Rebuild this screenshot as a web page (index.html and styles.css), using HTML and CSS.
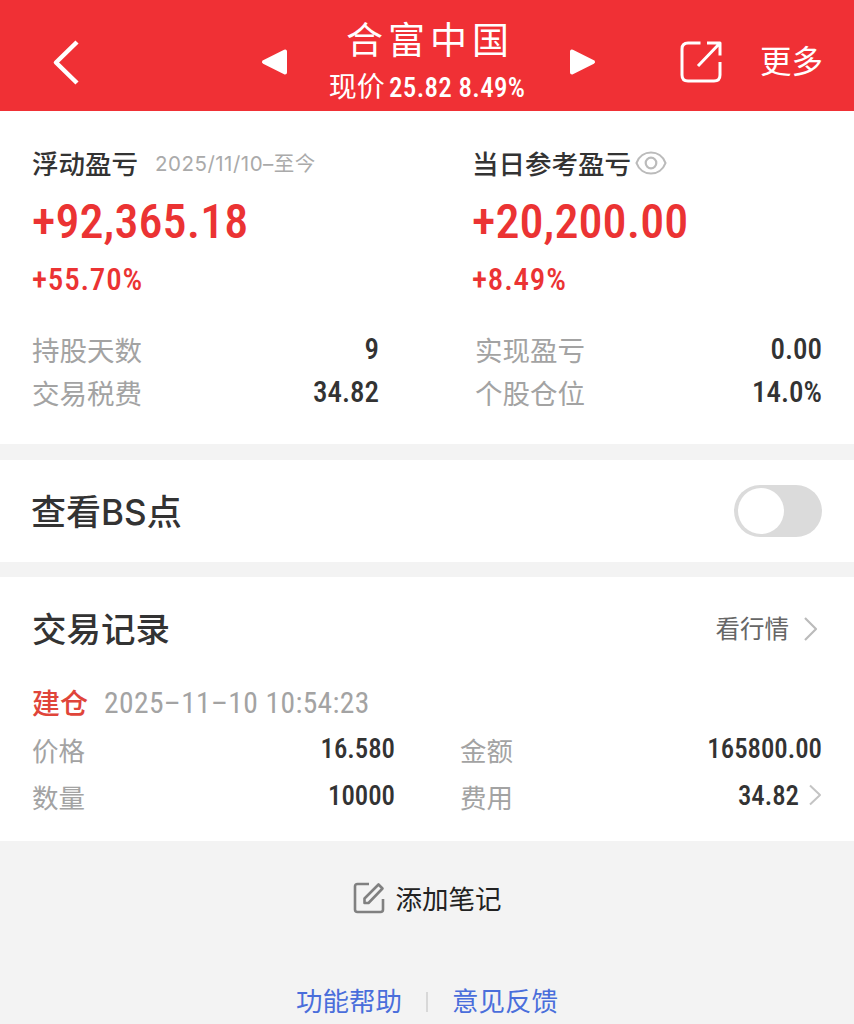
FILE: index.html
```html
<!DOCTYPE html>
<html lang="zh-CN">

<head>
    <meta charset="utf-8" />
    <title>合富中国</title>
    <link rel="stylesheet" href="styles.css">
</head>

<body>
    <div class="header">
        <a href="#" class="back">
            <svg width="28" height="48" viewBox="0 0 28 48"><path d="M25 4 L4 24.500 L25 45" /></svg>
        </a>
        <a href="#" class="prev">
            <svg width="27" height="28" viewBox="0 0 27 28"><path d="M3 14 L24 3.500 V24.500 Z" /></svg>
        </a>
        <div class="stock">
            <h1>合富中国</h1>
            <p>现价 <span class="num">25.82 8.49%</span></p>
        </div>
        <a href="#" class="next">
            <svg width="27" height="28" viewBox="0 0 27 28"><path d="M24 14 L3 3.500 V24.500 Z" /></svg>
        </a>
        <a href="#" class="share">
            <svg width="44" height="44" viewBox="0 0 44 44">
                <path d="M21.500 3 H9 Q3 3 3 9 V35 Q3 41 9 41 H35 Q41 41 41 35 V22" />
                <path d="M28 3 H41 V15.500 M41 3 L19 26" />
            </svg>
        </a>
        <a href="#" class="more">更多</a>
    </div>

    <div class="summary">
        <div class="profit">
            <div class="col">
                <div class="label">浮动盈亏<span class="date">2025/11/10–至今</span></div>
                <div class="amount num">+92,365.18</div>
                <div class="rate num">+55.70%</div>
            </div>
            <div class="col">
                <div class="label">当日参考盈亏
                    <svg class="eye" width="32" height="24" viewBox="0 0 32 24">
                        <path d="M1.500 12 C4 5 10 1.500 16 1.500 S28 5 30.500 12 C28 19 22 22.500 16 22.500 S4 19 1.500 12 Z" />
                        <circle cx="16" cy="12" r="5.300" />
                    </svg>
                </div>
                <div class="amount num">+20,200.00</div>
                <div class="rate num">+8.49%</div>
            </div>
        </div>
        <dl class="detail">
            <div><dt>持股天数</dt><dd class="num">9</dd></div>
            <div><dt>实现盈亏</dt><dd class="num">0.00</dd></div>
            <div><dt>交易税费</dt><dd class="num">34.82</dd></div>
            <div><dt>个股仓位</dt><dd class="num">14.0%</dd></div>
        </dl>
    </div>

    <div class="bs">
        <h2>查看<span>BS</span>点</h2>
        <span class="switch"></span>
    </div>

    <div class="record">
        <div class="recordTop">
            <h2>交易记录</h2>
            <a href="#">看行情
                <svg width="15" height="26" viewBox="0 0 15 26"><path d="M2 2 L13 13 L2 24" /></svg>
            </a>
        </div>
        <div class="time"><b>建仓</b><span class="num">2025–11–10 10:54:23</span></div>
        <dl class="trade">
            <div><dt>价格</dt><dd class="num">16.580</dd></div>
            <div><dt>金额</dt><dd class="num">165800.00</dd></div>
            <div><dt>数量</dt><dd class="num">10000</dd></div>
            <div><dt>费用</dt><dd class="num">34.82</dd>
                <svg width="14" height="22" viewBox="0 0 14 22"><path d="M2 1.500 L12 11 L2 20.500" /></svg>
            </div>
        </dl>
    </div>

    <a href="#" class="note">
        <svg width="32" height="32" viewBox="0 0 32 32">
            <path d="M16 2 H4.500 Q2 2 2 4.500 V27.500 Q2 30 4.500 30 H27.500 Q30 30 30 27.500 V17" />
            <path d="M11.500 21 V16.500 L25.500 2.500 L29.500 6.500 L15.500 21 Z" />
        </svg>
        添加笔记
    </a>

    <div class="footer">
        <a href="#">功能帮助</a>
        <span class="bar"></span>
        <a href="#">意见反馈</a>
    </div>
</body>

</html>
```
FILE: styles.css
```css
body,
div,
h1,
h2,
p,
dl,
dt,
dd {
    margin: 0;
    padding: 0
}

body {
    height: 1024px;
    overflow: hidden;
    background: #f3f3f3;
    color: #333;
    font-family: "Noto Sans CJK SC", sans-serif
}

a {
    color: inherit;
    text-decoration: none
}

svg {
    display: block;
    flex: none;
    fill: none;
    stroke-linejoin: round
}

.num {
    font-family: Roboto, "Noto Sans CJK SC", sans-serif;
    font-weight: 500;
    font-stretch: 85%
}

/* header */
.header {
    display: flex;
    height: 111px;
    padding-top: 1px;
    box-sizing: border-box;
    background: #f03035;
    color: #fff
}

.header a {
    display: flex;
    align-items: center;
    height: 122px
}

.header svg {
    stroke: #fff
}

.back { margin-left: 52px }
.back svg { stroke-width: 4.5 }
.prev { margin-left: 181px }
.header .prev svg,
.header .next svg { fill: #fff; stroke-width: 4 }

.stock {
    width: 281px;
    text-align: center
}

.stock h1 {
    height: 62px;
    line-height: 74px;
    font-size: 37px;
    font-weight: 400;
    letter-spacing: 5px;
    text-indent: 3px
}

.stock p {
    margin-left: -3px;
    line-height: 45px;
    font-size: 28px;
    white-space: nowrap
}

.stock .num {
    font-size: 27px;
    letter-spacing: .3px;
    margin-left: -2px
}

.share { margin-left: 83px }
.share svg { stroke-width: 3 }
.header .more {
    height: 117px;
    margin-left: 37px;
    font-size: 31.5px;
    line-height: 1
}

/* profit */
.summary {
    height: 333px;
    background: #fff
}

.profit {
    display: flex;
    padding: 34px 0 0 32px
}

.profit .col {
    flex: none;
    width: 440px
}

.profit .col + .col { width: 380px }

.label {
    display: flex;
    align-items: center;
    height: 34px;
    padding-bottom: 2px;
    font-size: 26.5px;
    font-weight: 500;
    white-space: nowrap
}

.date {
    margin-left: 17px;
    font-family: Inter, "Noto Sans CJK SC", sans-serif;
    font-size: 20.5px;
    font-weight: 400;
    letter-spacing: .5px;
    color: #aaa
}

.eye {
    margin: 2px 0 0 4px;
    stroke: #bbb;
    stroke-width: 2.2
}

.amount {
    height: 80px;
    line-height: 81px;
    font-size: 48px;
    letter-spacing: .1px;
    color: #eb3333
}

.rate {
    height: 38px;
    line-height: 38px;
    font-size: 31px;
    letter-spacing: .8px;
    color: #eb3333
}

.detail {
    display: grid;
    grid-template-columns: 347px 347px;
    column-gap: 96px;
    padding: 28px 0 0 32px
}

.detail div,
.trade div {
    display: flex;
    align-items: center;
    justify-content: space-between
}

.detail div { height: 43px }

.detail dt {
    font-size: 27.5px;
    color: #a3a3a3
}

.detail dd {
    font-size: 29px
}

/* switch row */
.bs {
    display: flex;
    align-items: center;
    justify-content: space-between;
    height: 102px;
    margin-top: 16px;
    padding: 0 32px 0 31px;
    background: #fff
}

h2 {
    font-size: 34.5px;
    font-weight: 500;
    line-height: 50px
}

.bs h2 { font-size: 35px }
.bs h2 span { font-family: Inter, sans-serif }

.switch {
    width: 88px;
    height: 52px;
    padding: 3px 4px;
    box-sizing: border-box;
    border-radius: 26px;
    background: #dbdbdb
}

.switch::before {
    content: "";
    display: block;
    width: 46px;
    height: 46px;
    border-radius: 50%;
    background: #fff
}

/* trade record */
.record {
    height: 264px;
    margin-top: 15px;
    padding: 0 32px;
    box-sizing: border-box;
    background: #fff
}

.recordTop {
    display: flex;
    align-items: center;
    justify-content: space-between;
    height: 100px
}

.recordTop a {
    display: flex;
    align-items: center;
    margin-right: 4px;
    font-size: 24.5px;
    color: #666
}

.recordTop svg {
    margin: 3px 0 0 14px;
    stroke: #bbb;
    stroke-width: 2.2
}

.time {
    display: flex;
    align-items: center;
    height: 50px;
    font-size: 28px
}

.time b {
    font-weight: 500;
    color: #e0453a
}

.time .num {
    margin: 2px 0 0 16px;
    font-size: 29.5px;
    font-weight: 400;
    letter-spacing: .4px;
    color: #a3a3a3
}

.trade {
    display: grid;
    grid-template-columns: 363px 362px;
    column-gap: 65px
}

.trade div { height: 47px }

.trade dt {
    margin-top: -2px;
    font-size: 26.5px;
    color: #a3a3a3
}

.trade dd {
    margin: -3px 0 0 auto;
    font-size: 26.8px
}

.trade svg {
    margin: -6px 0 0 9px;
    stroke: #c4c4c4;
    stroke-width: 2
}

/* bottom */
.note {
    display: flex;
    align-items: center;
    justify-content: center;
    height: 113px;
    font-size: 26.5px;
    color: #222
}

.note svg {
    margin-right: 11px;
    stroke: #808080;
    stroke-width: 2.6
}

.footer {
    display: flex;
    align-items: center;
    justify-content: center;
    height: 91px;
    font-size: 26.5px;
    color: #4a6edb
}

.bar {
    width: 2px;
    height: 20px;
    margin: 5px 24px 0;
    background: #d8d8d8
}
```
